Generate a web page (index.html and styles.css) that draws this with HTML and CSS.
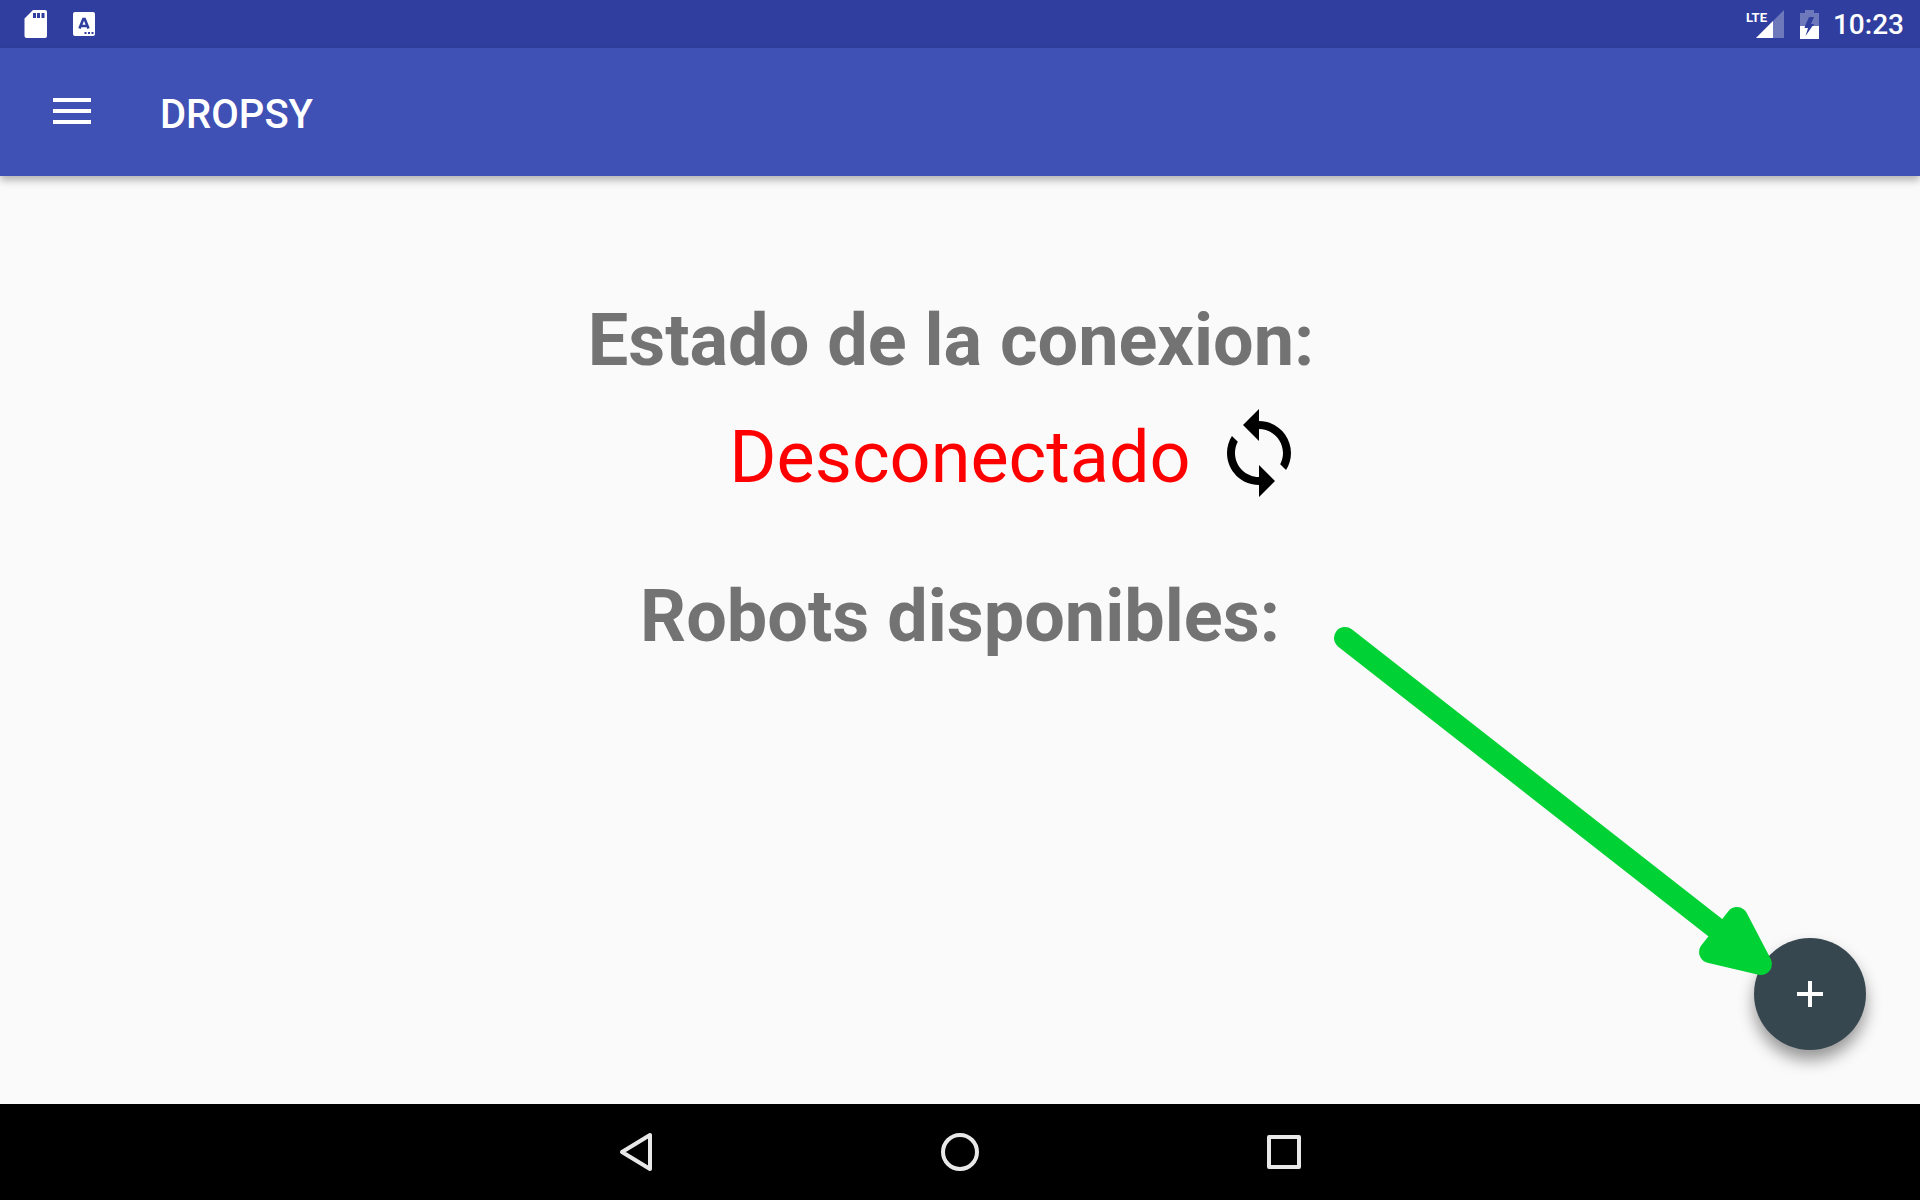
FILE: index.html
```html
<!DOCTYPE html>
<html lang="es">
<head>
<meta charset="utf-8">
<meta name="viewport" content="width=device-width, initial-scale=1">
<title>DROPSY</title>
<link rel="stylesheet" href="styles.css">
</head>
<body>
<div class="status-bar">
  <div class="status-group status-notices">
    <svg width="24" height="28" viewBox="0 0 24 28" aria-hidden="true"><path fill="#fff" fill-rule="evenodd" d="M9 0h12a2 2 0 0 1 2 2v24a2 2 0 0 1-2 2H2.500a2 2 0 0 1-2-2V8.500zM9 3v5h3V3zM13 3v5h3V3zM17.500 3v5h3V3z"/></svg>
    <svg width="22" height="24" viewBox="0 0 22 24" aria-hidden="true"><rect width="22" height="24" rx="2" fill="#fff"/><path d="M6.500 16.500 10.300 7h1.400l3.800 9.500M8 14h6" fill="none" stroke="#303f9f" stroke-width="2.600"/><path d="M11.500 20h2v2h-2zM15 20h2v2h-2zM18.500 20h2v2h-2z" fill="#303f9f"/></svg>
  </div>
  <div class="status-group status-system">
    <div class="signal">
      <svg width="28" height="28" viewBox="0 0 28 28" aria-hidden="true"><path d="M28 0v28H0z" fill="#fff" opacity=".3"/><path d="M17 11v17H0z" fill="#fff"/></svg>
      <span class="signal-type">LTE</span>
    </div>
    <svg class="battery" width="19" height="29" viewBox="0 0 19 29" aria-hidden="true"><path d="M5 0h9v3h5v13h-5.500l.5-2h-3l3-7H9l-4 9H0V3h5z" fill="#fff" opacity=".3"/><path fill="#fff" d="M0 16h5l-.5 2H8l-2.500 8L12.500 16H19v13H0z"/></svg>
    <time>10:23</time>
  </div>
</div>
<header class="app-bar">
  <button class="icon-button menu-button" aria-label="Menú">
    <svg width="38" height="26" viewBox="0 0 38 26"><path d="M0 2h38M0 13h38M0 24h38" stroke="#fff" stroke-width="4"/></svg>
  </button>
  <h1 class="app-title">DROPSY</h1>
</header>
<main class="content">
  <h2 class="heading heading-status">Estado de la conexion: </h2>
  <div class="connection">
    <p class="connection-state">Desconectado</p>
    <button class="icon-button sync-button" aria-label="Actualizar">
      <svg width="96" height="96" viewBox="0 0 24 24"><path d="M12 4V1L8 5l4 4V6c3.310 0 6 2.690 6 6 0 1.010-.25 1.970-.7 2.800l1.460 1.460C19.540 15.030 20 13.570 20 12c0-4.420-3.580-8-8-8zm0 14c-3.310 0-6-2.690-6-6 0-1.010.25-1.970.7-2.800L5.240 7.740C4.460 8.970 4 10.430 4 12c0 4.420 3.580 8 8 8v3l4-4-4-4v3z"/></svg>
    </button>
  </div>
  <h2 class="heading">Robots disponibles:</h2>
  <button class="icon-button fab" aria-label="Añadir robot">
    <svg width="28" height="28" viewBox="0 0 28 28"><path d="M14 1v26M1 14h26" stroke="#fff" stroke-width="4"/></svg>
  </button>
  <svg class="pointer" width="450" height="360" viewBox="0 0 450 360" aria-hidden="true"><g stroke="#00d134" stroke-width="22" stroke-linecap="round" stroke-linejoin="round"><path d="M15 18 410 327"/><path d="M407 298 431 344 380 332z" fill="#00d134"/></g></svg>
</main>
<nav class="nav-bar">
  <button class="icon-button" aria-label="Atrás"><svg width="40" height="40" viewBox="0 0 40 40"><path d="M34 3v34L6 20z"/></svg></button>
  <button class="icon-button" aria-label="Inicio"><svg width="40" height="40" viewBox="0 0 40 40"><circle cx="20" cy="20" r="17"/></svg></button>
  <button class="icon-button" aria-label="Recientes"><svg width="40" height="40" viewBox="0 0 40 40"><rect x="5" y="5" width="30" height="30"/></svg></button>
</nav>
</body>
</html>
```
FILE: styles.css
```css
* {
  box-sizing: border-box;
}

body {
  margin: 0;
  min-height: 100vh;
  display: flex;
  flex-direction: column;
  background: #fafafa;
  font-family: Roboto, "Liberation Sans", sans-serif;
}

h1, h2, p {
  margin: 0;
}

svg {
  display: block;
}

.icon-button {
  display: flex;
  align-items: center;
  justify-content: center;
  padding: 0;
  border: 0;
  background: none;
  cursor: pointer;
}

.status-bar {
  height: 48px;
  padding: 0 16px 0 24px;
  display: flex;
  align-items: center;
  justify-content: space-between;
  background: #303f9f;
  color: #fff;
}

.status-group {
  display: flex;
  align-items: center;
}

.status-notices {
  gap: 25px;
}

.status-system {
  gap: 16px;
  font-size: 28px;
  font-weight: 500;
  line-height: 32px;
}

.status-system time {
  margin-left: -2px;
  padding-top: 2px;
}

.signal {
  position: relative;
}

.signal-type {
  position: absolute;
  top: 0;
  right: 17px;
  font-size: 13px;
  font-weight: 700;
  line-height: 16px;
}

.app-bar {
  position: relative;
  z-index: 1;
  height: 128px;
  padding: 0 32px;
  display: flex;
  align-items: center;
  gap: 48px;
  background: #3f51b5;
  box-shadow: 0 4px 8px rgba(0, 0, 0, 0.3);
  color: #fff;
}

.menu-button {
  width: 80px;
  height: 128px;
  padding-bottom: 2px;
}

.app-title {
  padding-top: 6px;
  font-size: 40px;
  font-weight: 500;
  line-height: 48px;
}

.content {
  position: relative;
  flex: 1;
  padding: 123px 0 24px;
}

.heading {
  color: #737373;
  font-size: 72px;
  font-weight: 700;
  line-height: 84px;
  text-align: center;
}

.heading-status {
  white-space: pre;
}

.connection {
  margin: 22px 0 74px;
  display: grid;
  grid-template-columns: 1fr auto 1fr;
  align-items: center;
  column-gap: 20px;
}

.connection-state {
  grid-column: 2;
  padding-top: 10px;
  color: #f00;
  font-size: 72px;
  line-height: 84px;
}

.sync-button {
  justify-self: start;
}

.fab {
  position: absolute;
  right: 54px;
  bottom: 54px;
  width: 112px;
  height: 112px;
  border-radius: 50%;
  background: #37474f;
  box-shadow: 0 10px 16px rgba(0, 0, 0, 0.4);
}

.pointer {
  position: absolute;
  right: 140px;
  bottom: 124px;
  pointer-events: none;
}

.nav-bar {
  height: 96px;
  display: flex;
  align-items: center;
  justify-content: center;
  gap: 124px;
  background: #000;
}

.nav-bar .icon-button {
  width: 200px;
  height: 96px;
}

.nav-bar svg {
  fill: none;
  stroke: #e8e8e8;
  stroke-width: 4px;
  stroke-linejoin: round;
}
```
